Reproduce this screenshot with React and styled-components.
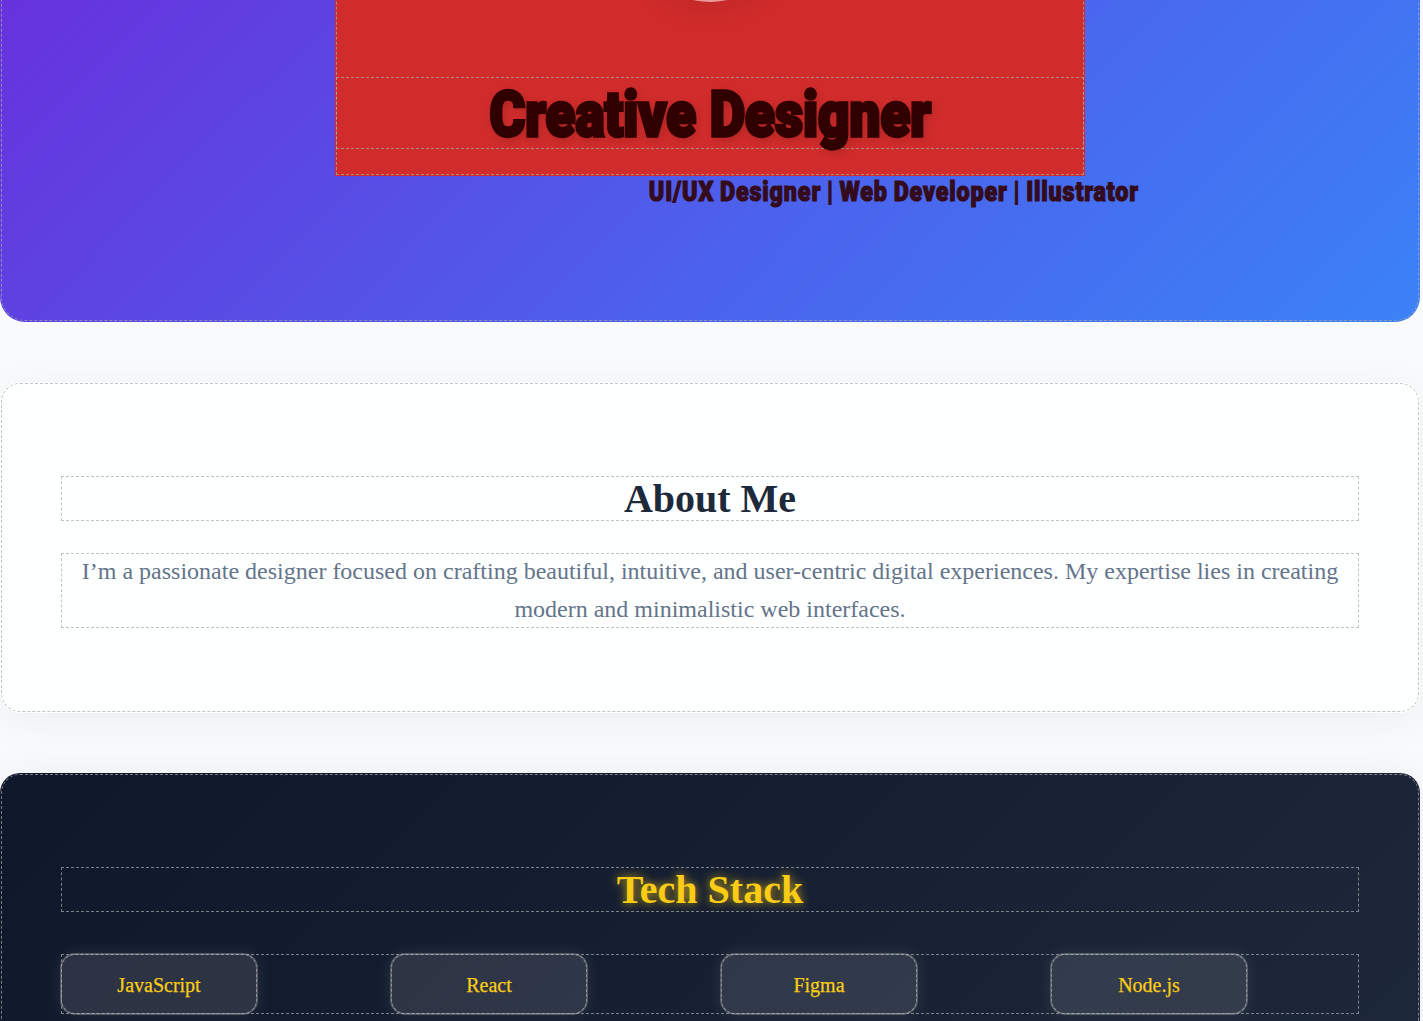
import React from "react";
import styled, { createGlobalStyle, css } from "styled-components";

const Global = createGlobalStyle`
  html, body { margin: 0; height: 1021px; overflow: hidden; background: #f9fafc; }
  body { font-family: "Liberation Serif", "Times New Roman", serif; }
  * { box-sizing: border-box; }
`;

const guide = css`
  outline: 1px dashed rgba(170, 170, 170, 0.7);
  outline-offset: -2px;
`;

const Page = styled.div`
  height: 1021px;
  overflow: hidden;
  padding-right: 3px;
  display: flex;
  flex-direction: column;
  gap: 60px;
`;

const Hero = styled.header`
  ${guide}
  flex: none;
  height: 622px;
  margin-top: -300px;
  border-radius: 0 0 25px 25px;
  background: linear-gradient(135deg, #6d28d9 5%, #4b63ed 64%, #3b82f6);
  display: flex;
  flex-direction: column;
  align-items: center;
`;

const Panel = styled.div`
  ${guide}
  width: 750px;
  height: 476px;
  background: #d02c2b;
  display: flex;
  flex-direction: column;
  align-items: center;
`;

const Avatar = styled.div`
  width: 150px;
  height: 150px;
  margin-top: 152px;
  border-radius: 50%;
  background: #e99a9a;
  box-shadow: 0 4px 30px rgba(0, 0, 0, 0.1);
`;

const Title = styled.h1`
  ${guide}
  width: 750px;
  height: 74px;
  margin: 74px 0 0;
  padding-top: 2px;
  display: flex;
  justify-content: center;
  color: #300000;
  font: 900 64px/74px Impact, Roboto, sans-serif;
  text-shadow: 2px 4px 10px rgba(0, 0, 0, 0.2);
  -webkit-text-stroke: 3.4px #300000;
  white-space: nowrap;
  span { transform: scale(0.855, 0.98); }
`;

const Role = styled.p`
  margin: 0;
  width: 490px;
  height: 34px;
  transform: translateX(184px);
  display: flex;
  justify-content: center;
  color: #330b1c;
  font: 900 28px/32px Impact, Roboto, sans-serif;
  letter-spacing: 1px;
  word-spacing: -1px;
  -webkit-text-stroke: 1.2px #330b1c;
  white-space: nowrap;
  span { transform: scaleX(0.834); }
`;

const Section = styled.section`
  ${guide}
  flex: none;
  height: ${(p) => p.$height}px;
  padding: 93px 60px 0;
  border-radius: 20px;
  text-align: center;
  background: ${(p) => (p.$dark ? "linear-gradient(135deg, #0f172a, #1e293b)" : "#fdfffe")};
  box-shadow: 0 ${(p) => (p.$dark ? 0 : 8)}px 40px rgba(0, 0, 0, 0.05);
`;

const Heading = styled.h2`
  ${guide}
  height: 47px;
  margin: 0 0 ${(p) => p.$gap}px;
  font-size: 40px;
  line-height: 47px;
  color: ${(p) => (p.$glow ? "#facc15" : "#1e293b")};
  text-shadow: ${(p) => (p.$glow ? "0 0 10px rgba(250, 204, 21, 0.8)" : "none")};
`;

const Text = styled.p`
  ${guide}
  margin: 0;
  font-size: 24px;
  line-height: 38.4px;
  color: #64748b;
`;

const Stack = styled.div`
  ${guide}
  display: grid;
  grid-template-columns: repeat(4, 1fr);
  gap: 20px;
`;

const Skill = styled.div`
  ${guide}
  width: 198px;
  height: 62px;
  border-radius: 15px;
  line-height: 61px;
  font-size: 20px;
  color: #facc15;
  -webkit-text-stroke: 0.25px #facc15;
  background: rgba(255, 255, 255, 0.11);
  box-shadow: 0 0 15px rgba(255, 255, 255, 0.09);
  border: 2px solid rgba(255, 255, 255, 0.18);
`;

export default function App() {
  return (
    <>
      <Global />
      <Page>
        <Hero>
          <Panel>
            <Avatar />
            <Title><span>Creative Designer</span></Title>
          </Panel>
          <Role><span>UI/UX Designer | Web Developer | Illustrator</span></Role>
        </Hero>
        <Section $height={331}>
          <Heading $gap={30}>About Me</Heading>
          <Text>
            I’m a passionate designer focused on crafting beautiful, intuitive, and user-centric digital
            experiences. My expertise lies in creating modern and minimalistic web interfaces.
          </Text>
        </Section>
        <Section $dark $height={400}>
          <Heading $glow $gap={40}>Tech Stack</Heading>
          <Stack>
            {["JavaScript", "React", "Figma", "Node.js"].map((name) => (
              <Skill key={name}>{name}</Skill>
            ))}
          </Stack>
        </Section>
      </Page>
    </>
  );
}
